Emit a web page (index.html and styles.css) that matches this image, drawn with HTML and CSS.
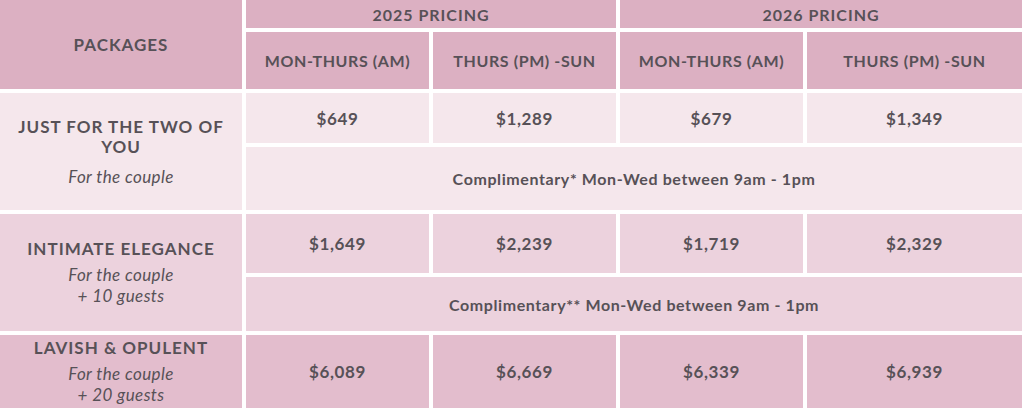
FILE: index.html
```html
<!DOCTYPE html>
<html lang="en">
<head>
<meta charset="utf-8">
<title>Packages pricing</title>
<link rel="stylesheet" href="styles.css">
</head>
<body>
<div class="pricing">
  <div class="cell head head-packages">PACKAGES</div>
  <div class="cell head head-year">2025 PRICING</div>
  <div class="cell head head-year">2026 PRICING</div>
  <div class="cell head">MON-THURS (AM)</div>
  <div class="cell head">THURS (PM) -SUN</div>
  <div class="cell head">MON-THURS (AM)</div>
  <div class="cell head">THURS (PM) -SUN</div>

  <div class="cell label tone-1 label-tall">
    <div class="label-title">JUST FOR THE TWO OF YOU</div>
    <div class="label-sub label-sub-loose">For the couple</div>
  </div>
  <div class="cell price tone-1">$649</div>
  <div class="cell price tone-1">$1,289</div>
  <div class="cell price tone-1">$679</div>
  <div class="cell price tone-1">$1,349</div>
  <div class="cell note tone-1">Complimentary* Mon-Wed between 9am - 1pm</div>

  <div class="cell label tone-2 label-tall">
    <div class="label-title">INTIMATE ELEGANCE</div>
    <div class="label-sub">For the couple<br>+ 10 guests</div>
  </div>
  <div class="cell price tone-2">$1,649</div>
  <div class="cell price tone-2">$2,239</div>
  <div class="cell price tone-2">$1,719</div>
  <div class="cell price tone-2">$2,329</div>
  <div class="cell note tone-2">Complimentary** Mon-Wed between 9am - 1pm</div>

  <div class="cell label tone-3">
    <div class="label-title">LAVISH &amp; OPULENT</div>
    <div class="label-sub">For the couple<br>+ 20 guests</div>
  </div>
  <div class="cell price tone-3">$6,089</div>
  <div class="cell price tone-3">$6,669</div>
  <div class="cell price tone-3">$6,339</div>
  <div class="cell price tone-3">$6,939</div>
</div>
</body>
</html>
```

FILE: styles.css
```css
html, body {
  margin: 0;
  padding: 0;
  background: #ffffff;
}

body {
  font-family: "Lato", "Open Sans", sans-serif;
  color: #575157;
}

.pricing {
  display: grid;
  grid-template-columns: 242px 183px 183px 183px 1fr;
  grid-template-rows: 28px 57px 50px 63px 59px 54px 73px;
  gap: 4px;
  width: 1022px;
}

.cell {
  display: flex;
  align-items: center;
  justify-content: center;
  text-align: center;
  box-sizing: border-box;
}

.head {
  background: #dcb0c2;
  font-weight: 700;
  font-size: 16px;
  letter-spacing: 0.6px;
}

.head-packages {
  grid-row: span 2;
  font-size: 17px;
  letter-spacing: 1px;
}

.head-year {
  grid-column: span 2;
  letter-spacing: 1px;
}

.tone-1 { background: #f5e7ec; }
.tone-2 { background: #ecd2dd; }
.tone-3 { background: #e3bdcd; }

.label {
  flex-direction: column;
  padding: 0 12px;
}

.label-tall {
  grid-row: span 2;
}

.label-title {
  font-weight: 700;
  font-size: 17px;
  line-height: 20px;
  letter-spacing: 1px;
}

.label-sub {
  font-style: italic;
  font-size: 17px;
  line-height: 21px;
  letter-spacing: 0.4px;
  margin-top: 5px;
}

.label-sub-loose {
  margin-top: 9px;
}

.price {
  font-weight: 700;
  font-size: 17px;
  letter-spacing: 0.6px;
}

.note {
  grid-column: span 4;
  font-weight: 700;
  font-size: 16px;
  letter-spacing: 0.6px;
}
```
